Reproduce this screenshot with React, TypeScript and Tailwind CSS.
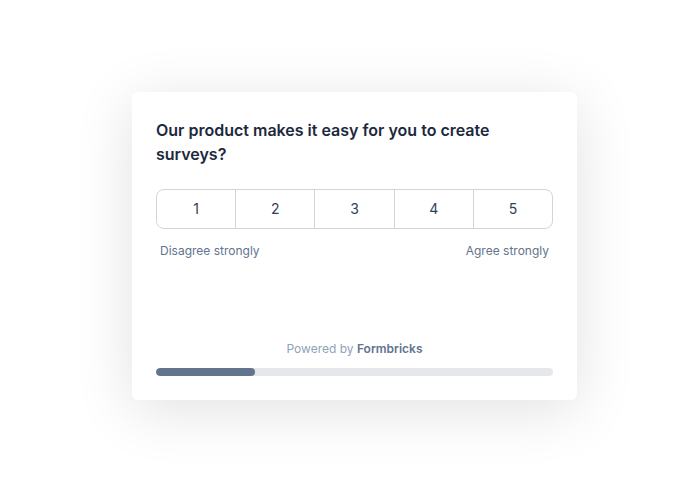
import React from "react";

const options = [1, 2, 3, 4, 5];

export default function App() {
  return (
    <div className="w-[700px] h-[481px] bg-white flex items-start pl-[132px] pt-[92px] font-['Inter',sans-serif]">
      <div className="w-[445px] bg-white rounded-md shadow-[0_10px_60px_rgba(0,0,0,0.12)] px-6 pt-[26px] pb-6 flex flex-col">
        <h1 className="text-base leading-6 font-semibold text-slate-800">
          Our product makes it easy for you to create surveys?
        </h1>

        <div className="mt-[23px] flex h-10 border border-gray-300 rounded-lg overflow-hidden">
          {options.map((n, i) => (
            <div
              key={n}
              className={`flex-1 flex items-center justify-center text-sm text-slate-700 ${i > 0 ? "border-l border-gray-300" : ""}`}
            >
              {n}
            </div>
          ))}
        </div>

        <div className="mt-[14px] flex justify-between px-1 text-xs leading-4 text-slate-500">
          <span>Disagree strongly</span>
          <span>Agree strongly</span>
        </div>

        <p className="mt-[82px] text-center text-xs leading-4 text-slate-400">
          Powered by <span className="font-semibold text-slate-500">Formbricks</span>
        </p>

        <div className="mt-[11px] h-2 rounded-full bg-gray-200 overflow-hidden">
          <div className="h-full w-1/4 rounded-full bg-slate-500" />
        </div>
      </div>
    </div>
  );
}
